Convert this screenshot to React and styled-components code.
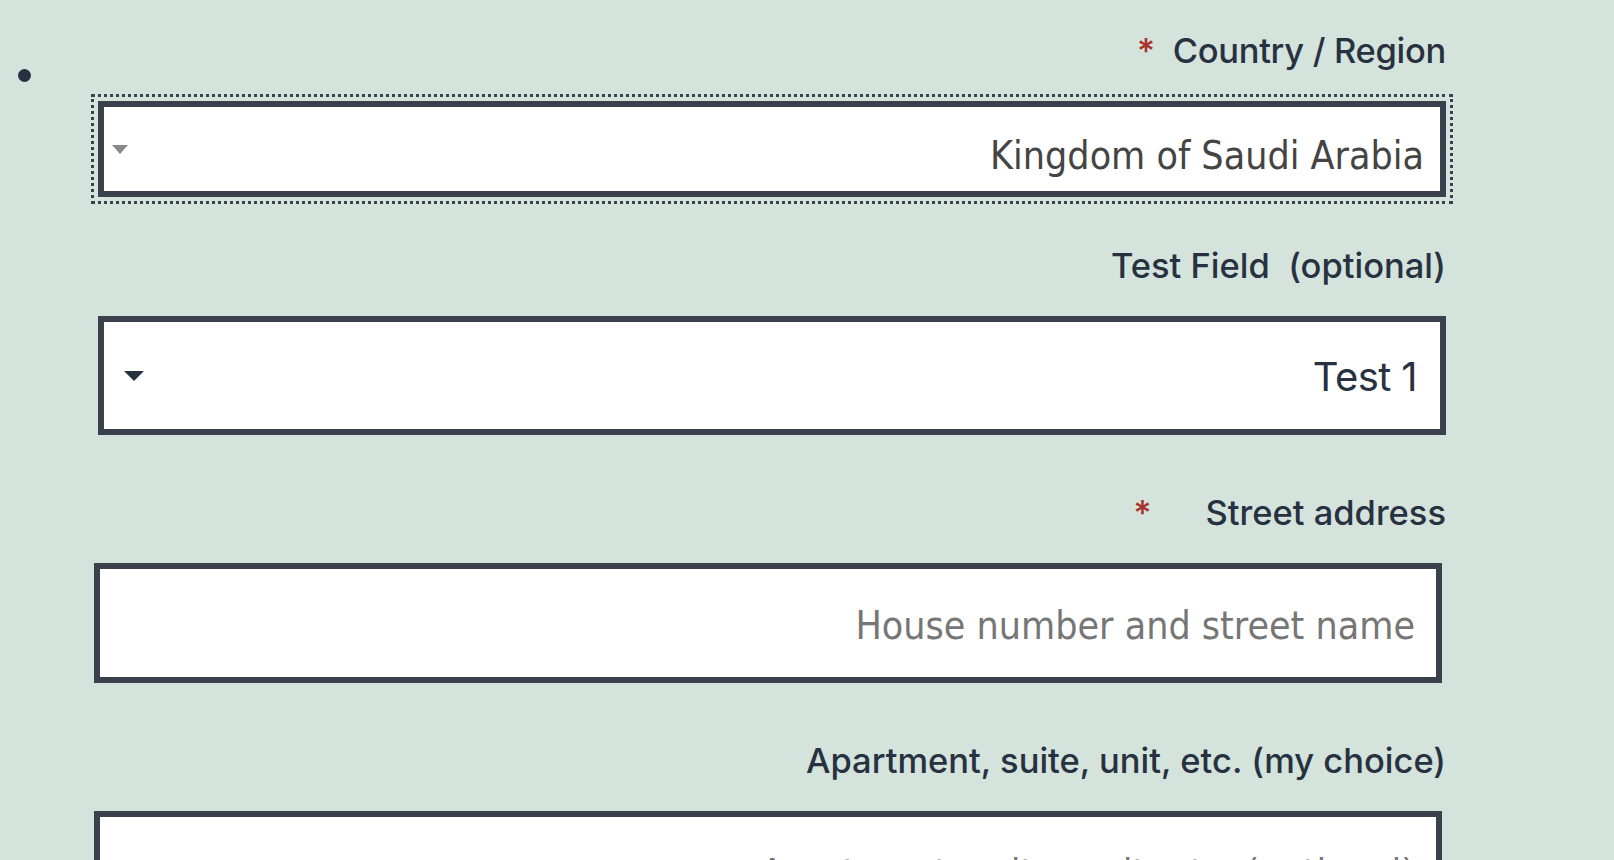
import styled, { createGlobalStyle } from "styled-components";

const GlobalStyle = createGlobalStyle`
  html, body {
    margin: 0;
    padding: 0;
    background: #d4e3dc;
    overflow: hidden;
  }
  body {
    font-family: Inter, "Noto Sans", sans-serif;
    color: #283140;
  }
`;

const ChevronDown = ({ color, width, height }) => (
  <svg width={width} height={height} viewBox="0 0 16 8" preserveAspectRatio="none">
    <path d="M0 0 L16 0 L8 8 Z" fill={color} />
  </svg>
);

const App = () => {
  return (
    <>
      <GlobalStyle />
      <Page>
        <BulletCell>
          <Bullet />
        </BulletCell>
        <Form>
          <Field $after={49}>
            <Label $gap={18} $tight>
              <Required>*</Required>
              <span>Country / Region</span>
            </Label>
            <FocusRing>
              <SelectBox $height={96} $padRight={16} $padLeft={8}>
                <ChevronDown color="#888888" width={16} height={9} />
                <SelectValue $gray $shift={13}>Kingdom of Saudi Arabia</SelectValue>
              </SelectBox>
            </FocusRing>
          </Field>

          <Field $after={58}>
            <Label>
              <span>Test Field&nbsp; (optional)</span>
            </Label>
            <SelectBox $height={119} $padRight={23} $padLeft={20}>
              <ChevronDown color="#283140" width={20} height={10} />
              <SystemValue>Test 1</SystemValue>
            </SelectBox>
          </Field>

          <Field $after={58}>
            <Label $gap={54}>
              <Required>*</Required>
              <span>Street address</span>
            </Label>
            <TextInput placeholder="House number and street name" />
          </Field>

          <Field $after={0}>
            <Label>
              <span>Apartment, suite, unit, etc. (my choice)</span>
            </Label>
            <TextInput placeholder="Apartment, suite, unit, etc. (optional)" />
          </Field>
        </Form>
      </Page>
    </>
  );
};

const Page = styled.div`
  display: grid;
  grid-template-columns: 94px 1352px;
  align-items: start;
`;

const BulletCell = styled.div`
  padding: 69px 0 0 18px;
`;

const Bullet = styled.div`
  width: 13px;
  height: 13px;
  border-radius: 50%;
  background: #283140;
`;

const Form = styled.div`
  display: flex;
  flex-direction: column;
  padding-top: 31px;
`;

const Field = styled.div`
  display: flex;
  flex-direction: column;
  margin-bottom: ${(props) => props.$after}px;
`;

const Label = styled.label`
  display: flex;
  justify-content: flex-end;
  align-items: baseline;
  gap: ${(props) => props.$gap || 0}px;
  height: 40px;
  font-family: Inter, "Noto Sans", sans-serif;
  font-size: 34.5px;
  font-weight: 500;
  line-height: 40px;
  letter-spacing: ${(props) => (props.$tight ? "-0.3px" : "0")};
  color: #283140;
  margin-bottom: 30px;
  white-space: pre;
`;

const Required = styled.span`
  color: #a8322b;
  font-weight: 500;
`;

const FocusRing = styled.div`
  margin-left: 4px;
  outline: 3px dotted #3a404c;
  outline-offset: 4px;
`;

const SelectBox = styled.div`
  box-sizing: border-box;
  height: ${(props) => props.$height}px;
  margin-left: 4px;
  border: 6px solid #3a404c;
  background: #ffffff;
  display: flex;
  align-items: center;
  justify-content: space-between;
  padding: 0 ${(props) => props.$padRight}px 0 ${(props) => props.$padLeft}px;

  ${FocusRing} & {
    margin-left: 0;
  }
`;

const SelectValue = styled.span`
  font-family: "DejaVu Sans Condensed", "DejaVu Sans", sans-serif;
  font-stretch: condensed;
  font-size: 39px;
  color: ${(props) => (props.$gray ? "#444444" : "#283140")};
  padding-top: ${(props) => props.$shift || 0}px;
`;

const SystemValue = styled.span`
  font-family: Inter, "Noto Sans", sans-serif;
  font-size: 40px;
  letter-spacing: -0.6px;
  color: #283140;
  padding-top: 2px;
`;

const TextInput = styled.input`
  box-sizing: border-box;
  width: 1348px;
  height: 120px;
  margin: 0;
  border: 6px solid #3a404c;
  border-radius: 0;
  background: #ffffff;
  padding: 5px 21px 0 21px;
  text-align: right;
  font-family: "DejaVu Sans Condensed", "DejaVu Sans", sans-serif;
  font-stretch: condensed;
  font-size: 39px;
  color: #444444;
  outline: none;

  &::placeholder {
    color: #767676;
    opacity: 1;
  }
`;

export default App;
